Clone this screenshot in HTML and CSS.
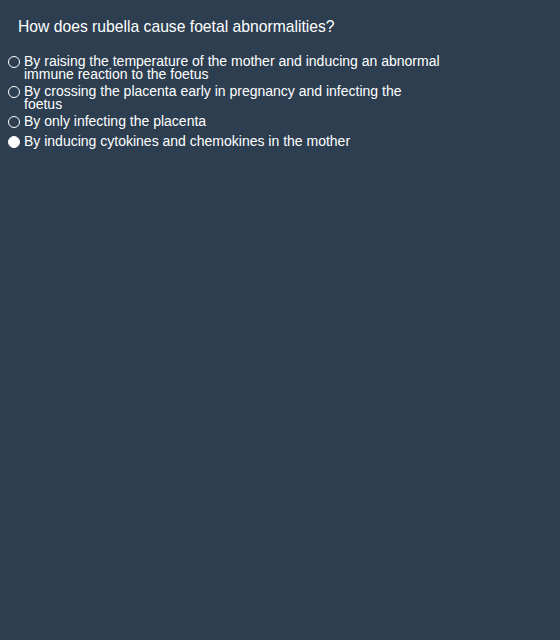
FILE: index.html
```html
<!DOCTYPE html>
<html>
<head>
<meta charset="utf-8">
<link rel="stylesheet" href="styles.css">
</head>
<body>
<div class="quiz">
  <div class="question">How does rubella cause foetal abnormalities?</div>
  <div class="options">
    <div class="option"><span class="radio"></span><span class="label">By raising the temperature of the mother and inducing an abnormal immune reaction to the foetus</span></div>
    <div class="option"><span class="radio"></span><span class="label">By crossing the placenta early in pregnancy and infecting the foetus</span></div>
    <div class="option"><span class="radio"></span><span class="label">By only infecting the placenta</span></div>
    <div class="option"><span class="radio checked"></span><span class="label">By inducing cytokines and chemokines in the mother</span></div>
  </div>
</div>
</body>
</html>
```
FILE: styles.css
```css
html, body {
  margin: 0;
  padding: 0;
  background: #2c3e50;
  height: 100%;
}
body {
  font-family: "Liberation Sans", Arial, sans-serif;
  color: #ffffff;
}
.quiz {
  padding-top: 18px;
}
.question {
  font-size: 15.7px;
  line-height: 18px;
  padding-left: 18px;
  margin-bottom: 19px;
}
.options {
  display: flex;
  flex-direction: column;
  gap: 4px;
}
.option {
  display: flex;
  align-items: flex-start;
  min-height: 16px;
  font-size: 14px;
  line-height: 13px;
}
.radio {
  flex: none;
  width: 12px;
  height: 12px;
  box-sizing: border-box;
  border: 1px solid #ffffff;
  border-radius: 50%;
  margin: 1px 4px 0 8px;
}
.radio.checked {
  background: #ffffff;
}
.label {
  max-width: 418px;
}
```
